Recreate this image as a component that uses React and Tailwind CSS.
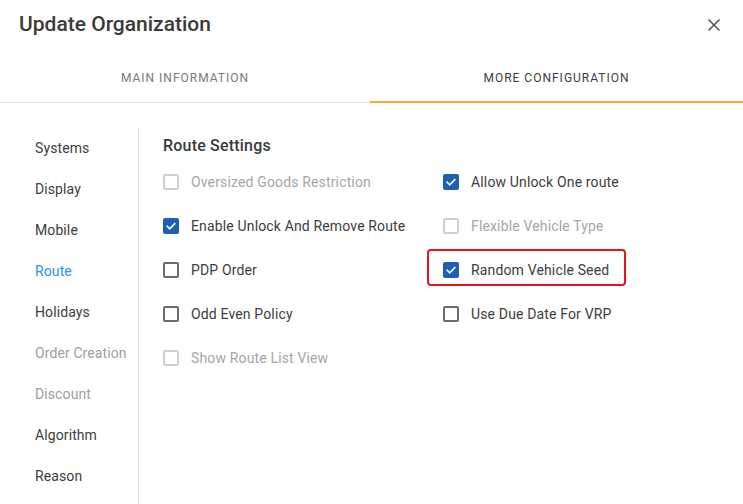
import React, { useState } from 'react';

const sections = [
    { label: 'Systems' },
    { label: 'Display' },
    { label: 'Mobile' },
    { label: 'Route', active: true },
    { label: 'Holidays' },
    { label: 'Order Creation', disabled: true },
    { label: 'Discount', disabled: true },
    { label: 'Algorithm' },
    { label: 'Reason' },
];

const options = [
    { label: 'Oversized Goods Restriction', disabled: true },
    { label: 'Allow Unlock One route', checked: true },
    { label: 'Enable Unlock And Remove Route', checked: true },
    { label: 'Flexible Vehicle Type', disabled: true },
    { label: 'PDP Order' },
    { label: 'Random Vehicle Seed', checked: true, highlight: true },
    { label: 'Odd Even Policy' },
    { label: 'Use Due Date For VRP' },
    { label: 'Show Route List View', disabled: true },
];

function Checkbox({ checked, disabled }) {
    if (checked) {
        return (
            <span className="w-[16px] h-[16px] rounded-[2px] bg-[#1d5fb0] flex items-center justify-center shrink-0">
                <svg width="12" height="12" viewBox="0 0 24 24" fill="none" stroke="white" strokeWidth="3.2" strokeLinecap="square">
                    <path d="M4.5 12.5l5 5 10-10" />
                </svg>
            </span>
        );
    }
    return (
        <span
            className={`w-[16px] h-[16px] rounded-[2px] border-2 shrink-0 ${disabled ? 'border-[#d0d0d0]' : 'border-[#6b6b6b]'}`}
        />
    );
}

function Option({ opt }) {
    const inner = (
        <>
            <Checkbox checked={opt.checked} disabled={opt.disabled} />
            <span className={`text-[14px] tracking-[0.15px] ${opt.disabled ? 'text-[#a6a6a6]' : 'text-[#3d3d3d]'}`}>{opt.label}</span>
        </>
    );
    if (opt.highlight) {
        return (
            <div className="h-[44px] flex items-center">
                <div className="w-[199px] h-[37px] mb-[5px] border-2 border-[#e8141b] rounded-[4px] flex items-center gap-[12px] pl-[14px] pt-[5px]">
                    {inner}
                </div>
            </div>
        );
    }
    return <div className="h-[44px] flex items-center gap-[12px] px-[16px]">{inner}</div>;
}

export default function App() {
    const [tab, setTab] = useState(1);

    return (
        <div className="w-[743px] h-[504px] bg-white overflow-hidden" style={{ fontFamily: 'Roboto, "Liberation Sans", sans-serif' }}>
            <div className="h-[50px] flex items-center justify-between pl-[19px] pr-[22px]">
                <h1 className="text-[21px] font-medium text-[#3a3a3a]">Update Organization</h1>
                <button className="text-[#555]">
                    <svg width="14" height="14" viewBox="0 0 14 14" stroke="currentColor" strokeWidth="1.6">
                        <path d="M1.5 1.5l11 11M12.5 1.5l-11 11" />
                    </svg>
                </button>
            </div>

            <div className="mt-[4px] grid grid-cols-[370px_1fr] border-b border-[#e0e0e0]">
                {['Main Information', 'More Configuration'].map((t, i) => (
                    <button
                        key={t}
                        onClick={() => setTab(i)}
                        className={`relative h-[48px] flex items-center justify-center text-[12px] uppercase tracking-[1px] ${tab === i ? 'text-[#3d3d3d]' : 'text-[#7a7a7a]'}`}
                    >
                        {t}
                        {tab === i && <span className="absolute left-0 right-0 bottom-[-1px] h-[2px] bg-[#f7ab34]" />}
                    </button>
                ))}
            </div>

            <div className="flex mt-[25px]">
                <div className="w-[139px] border-r border-[#e0e0e0] h-[380px]">
                    {sections.map((s) => (
                        <div
                            key={s.label}
                            className={`h-[41px] flex items-center pl-[35px] text-[14px] tracking-[0.1px] ${s.active ? 'text-[#2196f3]' : s.disabled ? 'text-[#9e9e9e]' : 'text-[#3d3d3d]'}`}
                        >
                            {s.label}
                        </div>
                    ))}
                </div>

                <div className="flex-1 pl-[24px]">
                    <div className="h-[32px] pt-[8px] leading-[20px] text-[16px] tracking-[0.2px] font-medium text-[#3a3a3a]">Route Settings</div>
                    <div className="grid grid-cols-[280px_1fr] -ml-[16px]">
                        {options.map((o) => (
                            <Option key={o.label} opt={o} />
                        ))}
                    </div>
                </div>
            </div>
        </div>
    );
}
